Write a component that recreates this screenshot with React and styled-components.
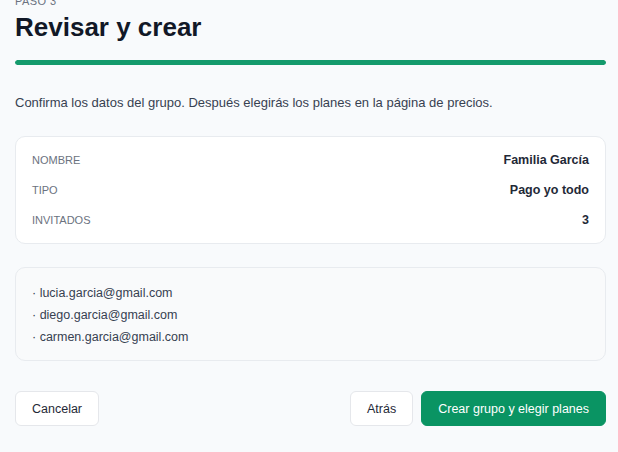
import React from "react";
import styled, { createGlobalStyle } from "styled-components";

const GlobalStyle = createGlobalStyle`
  html, body {
    margin: 0;
    padding: 0;
    background: #f8fafc;
    font-family: "Liberation Sans", Arial, sans-serif;
    overflow: hidden;
  }
`;

const summary = [
  { label: "Nombre", value: "Familia García" },
  { label: "Tipo", value: "Pago yo todo" },
  { label: "Invitados", value: "3" },
];

const invites = [
  "lucia.garcia@gmail.com",
  "diego.garcia@gmail.com",
  "carmen.garcia@gmail.com",
];

const App = () => {
  return (
    <Page>
      <GlobalStyle />
      <Step>Paso 3</Step>
      <Title>Revisar y crear</Title>
      <Progress>
        <ProgressFill style={{ width: "100%" }} />
      </Progress>
      <Intro>
        Confirma los datos del grupo. Después elegirás los planes en la página
        de precios.
      </Intro>
      <Card>
        {summary.map((row) => (
          <Row key={row.label}>
            <Label>{row.label}</Label>
            <Value>{row.value}</Value>
          </Row>
        ))}
      </Card>
      <Card $muted>
        {invites.map((mail) => (
          <Email key={mail}>· {mail}</Email>
        ))}
      </Card>
      <Actions>
        <Button>Cancelar</Button>
        <Spacer />
        <Button>Atrás</Button>
        <Button $primary>Crear grupo y elegir planes</Button>
      </Actions>
    </Page>
  );
};

export default App;

const Page = styled.div`
  display: flex;
  flex-direction: column;
  padding: 0 12px 0 15px;
  margin-top: -6px;
`;

const Step = styled.div`
  font-size: 11px;
  line-height: 14px;
  color: #6b7280;
  text-transform: uppercase;
  letter-spacing: 0.04em;
`;

const Title = styled.h1`
  margin: 3px 0 0;
  font-size: 26px;
  line-height: 32px;
  font-weight: 700;
  color: #111827;
`;

const Progress = styled.div`
  margin-top: 17px;
  height: 5px;
  border-radius: 3px;
  background: #e5e7eb;
  overflow: hidden;
`;

const ProgressFill = styled.div`
  height: 100%;
  background: #149a6c;
  border-radius: 3px;
`;

const Intro = styled.p`
  margin: 29px 0 0;
  font-size: 13px;
  line-height: 18px;
  color: #374151;
`;

const Card = styled.div`
  margin-top: ${(p) => (p.$muted ? "23px" : "24px")};
  padding: ${(p) => (p.$muted ? "14px 16px 12px" : "8px 16px")};
  border: 1px solid #e8ebef;
  border-radius: 10px;
  background: ${(p) => (p.$muted ? "#f9fafb" : "#ffffff")};
  display: flex;
  flex-direction: column;
`;

const Row = styled.div`
  display: flex;
  justify-content: space-between;
  align-items: center;
  height: 30px;
`;

const Label = styled.span`
  font-size: 11px;
  color: #6b7280;
  text-transform: uppercase;
`;

const Value = styled.span`
  font-size: 12.5px;
  font-weight: 600;
  color: #1f2937;
`;

const Email = styled.div`
  font-size: 12.5px;
  line-height: 22px;
  color: #374151;
`;

const Actions = styled.div`
  display: flex;
  align-items: center;
  gap: 8px;
  margin-top: 30px;
`;

const Spacer = styled.div`
  flex: 1;
`;

const Button = styled.button`
  height: 35px;
  padding: 0 16px;
  border-radius: 6px;
  font-family: inherit;
  font-size: 12.5px;
  font-weight: 500;
  cursor: pointer;
  border: 1px solid ${(p) => (p.$primary ? "#0a9463" : "#e5e7eb")};
  background: ${(p) => (p.$primary ? "#0a9463" : "#ffffff")};
  color: ${(p) => (p.$primary ? "#ffffff" : "#1f2937")};
`;
